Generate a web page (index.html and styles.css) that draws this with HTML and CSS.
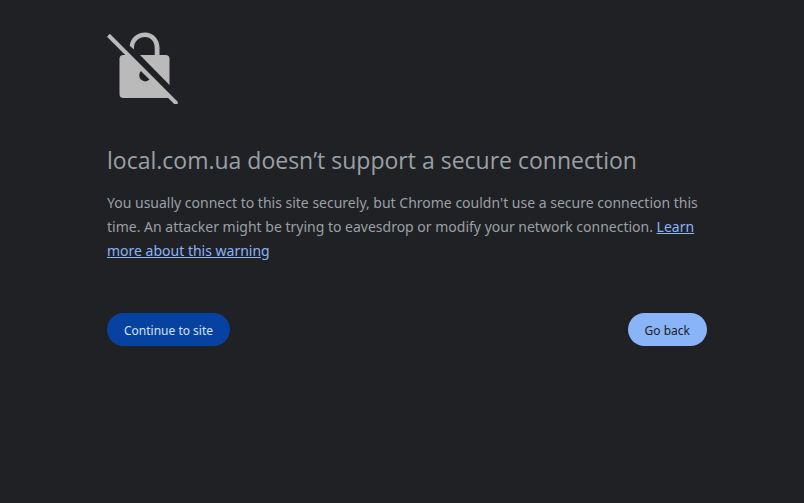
FILE: index.html
```
<!DOCTYPE html>
<html lang="en">
<head>
    <meta charset="UTF-8">
    <meta name="viewport" content="width=device-width, initial-scale=1.0">
    <title>local.com.ua</title>
    <link rel="stylesheet" href="styles.css">
</head>
<body>
    <main class="interstitial">
        <svg class="icon" viewBox="0 0 72 72" aria-hidden="true">
            <!-- Shackle -->
            <path d="M22.7 13.7C23.500 6 30 .5 37.900 .5C46.300 .5 52.500 7.200 52.500 15.600V24H47.700V15.600C47.700 9.400 43.600 5 37.900 5C32.200 5 27 9.200 27 15.600V17.600Z"/>
            <!-- Body -->
            <path d="M33 23H58.500a4 4 0 0 1 4 4V53ZM16.500 23H19L62.500 66H16.500a4 4 0 0 1-4-4V27a4 4 0 0 1 4-4Z"/>
            <path class="keyhole" d="M34 39A5.800 5.800 0 1 0 42.600 47.600Z"/>
            <!-- Slash -->
            <path d="M2.800 1.800L70.700 69.700V71.900H67.200L0 4.700Z"/>
        </svg>
        <h1>local.com.ua doesn’t support a secure connection</h1>
        <p>You usually connect to this site securely, but Chrome couldn't use a secure connection this time. An attacker might be trying to eavesdrop or modify your network connection. <a href="#">Learn more about this warning</a></p>
        <div class="buttons">
            <button class="secondary" type="button">Continue to site</button>
            <button class="primary" type="button">Go back</button>
        </div>
    </main>
</body>
</html>
```
FILE: styles.css
```
body {
    margin: 0;
    padding: 32px 0 32px 10px;
    background-color: #202124;
    color: #9aa0a6;
    font-family: "Noto Sans", sans-serif;
    font-size: 14px;
    line-height: 24px;
}
.interstitial {
    max-width: 600px;
    margin: 0 auto;
}
.icon {
    display: block;
    width: 72px;
    height: 72px;
    margin-bottom: 40px;
    fill: #bababa;
}
.keyhole {
    fill: #202124;
}
h1 {
    margin: 0 0 15px;
    font-family: "Open Sans", sans-serif;
    font-size: 23px;
    font-weight: 400;
    line-height: 32px;
}
p {
    margin: 0;
}
a {
    color: #8ab4f8;
}
.buttons {
    display: flex;
    flex-wrap: wrap;
    justify-content: space-between;
    margin-top: 50px;
}
button {
    border: 0;
    border-radius: 20px;
    padding: 9px 17px 7px;
    font-family: inherit;
    font-size: 12px;
    line-height: 17px;
    cursor: pointer;
}
.primary {
    background-color: #8ab4f8;
    color: #202124;
}
.secondary {
    background-color: #0842a0;
    color: #d3e3fd;
}
```
